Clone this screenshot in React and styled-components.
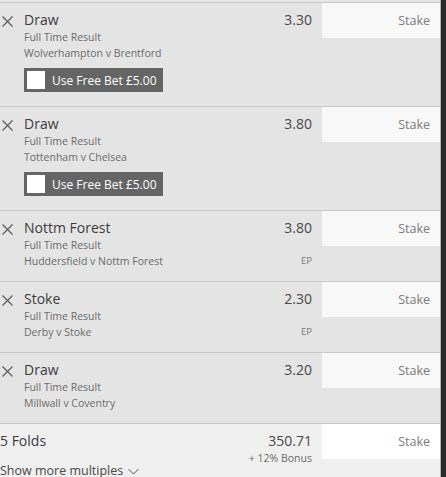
import React from 'react';
import styled, { createGlobalStyle } from 'styled-components';

const GlobalStyle = createGlobalStyle`
  html, body {
    margin: 0;
    padding: 0;
    background: #efefef;
    font-family: "Open Sans", "Noto Sans", sans-serif;
    overflow: hidden;
  }
`;

const bets = [
    { sel: 'Draw', market: 'Full Time Result', event: 'Wolverhampton v Brentford', odds: '3.30', freeBet: true },
    { sel: 'Draw', market: 'Full Time Result', event: 'Tottenham v Chelsea', odds: '3.80', freeBet: true },
    { sel: 'Nottm Forest', market: 'Full Time Result', event: 'Huddersfield v Nottm Forest', odds: '3.80', ep: true },
    { sel: 'Stoke', market: 'Full Time Result', event: 'Derby v Stoke', odds: '2.30', ep: true },
    { sel: 'Draw', market: 'Full Time Result', event: 'Millwall v Coventry', odds: '3.20' },
];

const CloseIcon = () => (
    <svg width="11" height="11" viewBox="0 0 11 11">
        <path d="M0.5 0.5 L10.5 10.5 M10.5 0.5 L0.5 10.5" stroke="#555" strokeWidth="1.1" fill="none" />
    </svg>
);

const Chevron = () => (
    <svg width="11" height="7" viewBox="0 0 11 7">
        <path d="M0.5 1 L5.5 6 L10.5 1" stroke="#555" strokeWidth="1" fill="none" />
    </svg>
);

const App = () => {
    return (
        <Page>
            <GlobalStyle />
            <Slip>
                {bets.map((b, i) => (
                    <Row key={i}>
                        <Close><CloseIcon /></Close>
                        <Info>
                            <Title>{b.sel}</Title>
                            <Sub>{b.market}</Sub>
                            <Sub>{b.event}</Sub>
                            {b.freeBet && (
                                <FreeBet>
                                    <Check />
                                    <span>Use Free Bet £5.00</span>
                                </FreeBet>
                            )}
                        </Info>
                        <OddsCol>
                            <Odds>{b.odds}</Odds>
                            {b.ep && <Ep>EP</Ep>}
                        </OddsCol>
                        <StakeBox>Stake</StakeBox>
                    </Row>
                ))}
                <FoldsRow>
                    <Info>
                        <Title>5 Folds</Title>
                    </Info>
                    <OddsCol>
                        <Odds>350.71</Odds>
                        <Bonus>+ 12% Bonus</Bonus>
                    </OddsCol>
                    <StakeBox $white>Stake</StakeBox>
                </FoldsRow>
                <ShowMore>
                    Show more multiples <Chevron />
                </ShowMore>
            </Slip>
            <Scrollbar />
        </Page>
    );
};

const Page = styled.div`
    display: flex;
    width: 446px;
    height: 477px;
    overflow: hidden;
`;

const Slip = styled.div`
    width: 440px;
    padding-top: 2px;
    background: #efefef;
    display: flex;
    flex-direction: column;
    box-shadow: inset 0 2px 0 #e4e4e4;
`;

const Scrollbar = styled.div`
    width: 5px;
    border-left: 1px solid #b4b4b4;
    background: #2b2b2b;
`;

const Row = styled.div`
    display: flex;
    align-items: flex-start;
    background: #e4e4e4;
    border-top: 1px solid #c8c8c8;
`;

const Close = styled.div`
    width: 24px;
    padding: 13px 0 0 2px;
    box-sizing: border-box;
    display: flex;
`;

const Info = styled.div`
    flex: 1;
    padding: 8px 0 12px;
    display: flex;
    flex-direction: column;
    align-items: flex-start;
`;

const Title = styled.div`
    font-size: 14px;
    line-height: 18px;
    color: #3c3c3c;
`;

const Sub = styled.div`
    font-size: 10.5px;
    line-height: 16px;
    color: #6a6a6a;
`;

const FreeBet = styled.div`
    display: flex;
    align-items: center;
    gap: 7px;
    margin: 7px 0 2px;
    width: 139px;
    height: 24px;
    padding: 0 3px;
    box-sizing: border-box;
    background: #656565;
    color: #fff;
    font-size: 12px;
    font-weight: 400;
`;

const Check = styled.div`
    width: 18px;
    height: 18px;
    background: #fff;
`;

const OddsCol = styled.div`
    padding: 8px 10px 0 0;
    display: flex;
    flex-direction: column;
    align-items: flex-end;
`;

const Odds = styled.div`
    font-size: 14px;
    line-height: 18px;
    color: #484848;
`;

const Ep = styled.div`
    margin-top: 16px;
    font-size: 9.5px;
    line-height: 16px;
    color: #7a7a7a;
`;

const Bonus = styled.div`
    font-size: 10.5px;
    line-height: 16px;
    color: #6a6a6a;
`;

const StakeBox = styled.div`
    width: 118px;
    height: 35px;
    box-sizing: border-box;
    padding-right: 10px;
    display: flex;
    align-items: center;
    justify-content: flex-end;
    background: ${p => (p.$white ? '#fff' : '#f8f8f8')};
    color: #7a7a7a;
    font-size: 12.5px;
`;

const FoldsRow = styled.div`
    display: flex;
    align-items: flex-start;
    background: #efefef;
    border-top: 1px solid #c8c8c8;

    ${Info} {
        padding-bottom: 4px;
    }
`;

const ShowMore = styled.div`
    display: flex;
    align-items: center;
    gap: 5px;
    font-size: 12.5px;
    line-height: 16px;
    color: #484848;
    margin-top: -3px;
`;

export default App;
